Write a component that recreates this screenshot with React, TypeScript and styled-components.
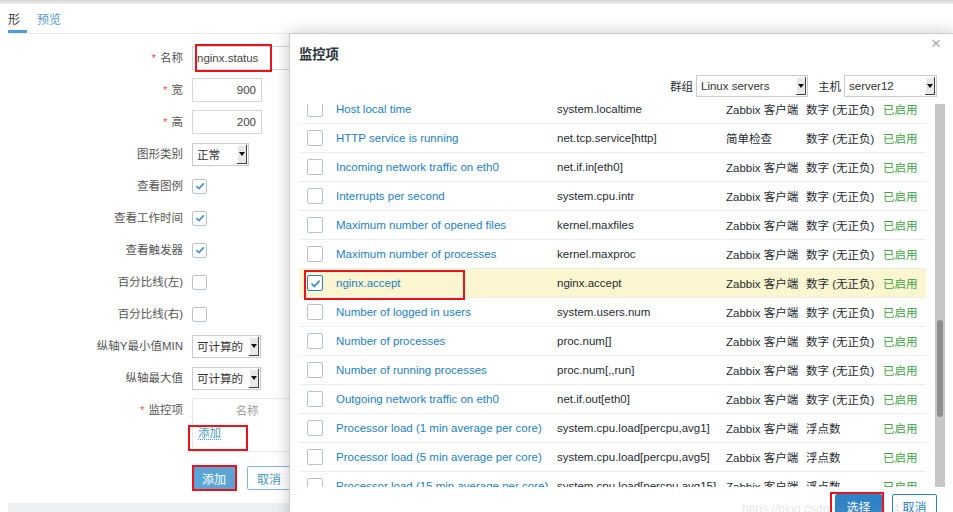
import React, { useEffect, useRef } from "react";
import styled, { createGlobalStyle } from "styled-components";

const GlobalStyle = createGlobalStyle`
  html, body {
    margin: 0;
    padding: 0;
    height: 100%;
    overflow: hidden;
    background: #fff;
  }
  body {
    font-family: "Liberation Sans", Arial, "Noto Sans CJK SC", sans-serif;
    font-size: 11.5px;
    color: #1f2c33;
  }
`;

const Page = styled.div`
  position: relative;
  width: 953px;
  height: 512px;
  overflow: hidden;
  display: flex;
  flex-direction: column;
`;

const TopStrip = styled.div`
  height: 4px;
  background: linear-gradient(#d6d6d6, #ececec);
`;

const Main = styled.div`
  flex: 1;
  margin-left: 8px;
  display: flex;
  flex-direction: column;
`;

const BottomBand = styled.div`
  height: 9px;
  margin-left: 8px;
  background: #eef0f1;
`;

const TabBar = styled.div`
  display: flex;
  height: 29px;
  border-bottom: 1px solid #e6e9eb;
`;

const Tab = styled.div<{ $active?: boolean; $clipped?: boolean }>`
  display: flex;
  align-items: center;
  padding: 3px 7px 0 ${(p) => (p.$clipped ? 0 : 7)}px;
  margin-right: 3px;
  font-size: 12px;
  border-bottom: 3px solid ${(p) => (p.$active ? "#4f9dd6" : "transparent")};
  color: ${(p) => (p.$active ? "#3a3a3a" : "#5b9bd0")};
`;

const Form = styled.div`
  display: grid;
  grid-template-columns: 175px 1fr;
  column-gap: 9px;
  row-gap: 8px;
  padding-top: 12px;
  align-items: center;
`;

const Label = styled.div<{ $top?: boolean }>`
  text-align: right;
  line-height: 24px;
  color: #555;
  align-self: ${(p) => (p.$top ? "start" : "center")};
`;

const Star = styled.span`
  color: #e45959;
  margin-right: 4px;
`;

const TextInput = styled.div<{ $w: number; $right?: boolean }>`
  box-sizing: border-box;
  width: ${(p) => p.$w}px;
  height: 24px;
  border: 1px solid #d3d7da;
  display: flex;
  align-items: center;
  justify-content: ${(p) => (p.$right ? "flex-end" : "flex-start")};
  padding: 0 5px 0 4px;
  color: #444;
  background: #fff;
`;

const Select = styled.div<{ $w: number; $h?: number }>`
  box-sizing: border-box;
  width: ${(p) => p.$w}px;
  height: ${(p) => p.$h ?? 23}px;
  border: 1px solid #c8cccf;
  display: flex;
  align-items: center;
  padding: 1px 1px 1px 4px;
  color: #333;
  background: #fff;
  font-size: 11.5px;
`;

const SelectText = styled.span`
  flex: 1;
  white-space: nowrap;
  overflow: hidden;
`;

const Arrow = styled.span`
  width: 10px;
  align-self: stretch;
  background: #e8e8e8;
  box-shadow: inset -1px -1px 0 #444, inset 1px 1px 0 #fff;
  display: flex;
  align-items: center;
  justify-content: center;
  &::after {
    content: "";
    border-left: 3px solid transparent;
    border-right: 3px solid transparent;
    border-top: 4px solid #111;
  }
`;

const Check = styled.div<{ $size: number; $checked?: boolean; $strong?: boolean }>`
  box-sizing: border-box;
  width: ${(p) => p.$size}px;
  height: ${(p) => p.$size}px;
  border: 1px solid ${(p) => (p.$checked && p.$strong ? "#2d80c2" : "#b7c3c9")};
  border-radius: 2px;
  background: #fff;
  display: flex;
  align-items: center;
  justify-content: center;
`;

const ItemsBox = styled.div`
  box-sizing: border-box;
  width: 110px;
  height: 54px;
  border: 1px solid #e4e8ea;
  padding: 0 5px;
`;

const ItemsHead = styled.div`
  height: 27px;
  line-height: 24px;
  text-align: center;
  color: #9a9a9a;
`;

const AddLink = styled.span`
  color: #4796c4;
  border-bottom: 1px dotted #4796c4;
  line-height: 14px;
`;

const FormButtons = styled.div`
  grid-column: 2;
  display: flex;
  gap: 11px;
  margin-top: 6px;
`;

const Button = styled.div<{ $primary?: boolean; $w: number; $tone?: string }>`
  box-sizing: border-box;
  width: ${(p) => p.$w}px;
  height: 24px;
  display: flex;
  align-items: center;
  justify-content: center;
  border-radius: 2px;
  font-size: 12px;
  border: 1px solid ${(p) => p.$tone ?? "#7fb6de"};
  background: ${(p) => (p.$primary ? p.$tone ?? "#5aa5d6" : "#fff")};
  color: ${(p) => (p.$primary ? "#fff" : p.$tone ?? "#4796c4")};
`;

const Modal = styled.div`
  position: absolute;
  left: 289px;
  top: 33px;
  width: 666px;
  height: 500px;
  box-sizing: border-box;
  background: #fff;
  border: 1px solid #c9cdd0;
  box-shadow: 0 0 16px rgba(0, 0, 0, 0.22);
  padding: 0 9px;
  display: flex;
  flex-direction: column;
`;

const ModalHead = styled.div`
  height: 38px;
  display: flex;
  justify-content: space-between;
`;

const ModalTitle = styled.div`
  align-self: center;
  font-size: 13.3px;
  font-weight: 700;
  color: #2a353b;
`;

const Close = styled.div`
  margin-top: 2px;
  margin-right: 4px;
  font-size: 17px;
  line-height: 16px;
  color: #a8a8a8;
`;

const FilterBar = styled.div`
  display: flex;
  justify-content: flex-end;
  align-items: center;
  margin-top: 3px;
  padding-right: 8px;
  gap: 3px;
`;

const FilterLabel = styled.span<{ $gap?: boolean }>`
  margin-left: ${(p) => (p.$gap ? 7 : 0)}px;
  color: #1f2c33;
`;

const ListWrap = styled.div`
  display: flex;
  margin-top: 7px;
  height: 383px;
`;

const ScrollArea = styled.div`
  width: 627px;
  height: 100%;
  overflow: hidden;
`;

const Track = styled.div`
  width: 10px;
  margin-left: 9px;
  background: #c6c6c6;
  display: flex;
  flex-direction: column;
`;

const Thumb = styled.div`
  width: 6px;
  margin-left: 2px;
  border-radius: 3px;
  background: #8e8e8e;
`;

const Row = styled.div<{ $selected?: boolean }>`
  display: grid;
  grid-template-columns: 37px 221px 169px 80px 77px 1fr;
  align-items: center;
  height: 29px;
  box-sizing: border-box;
  border-bottom: 1px solid #ebeef0;
  background: ${(p) => (p.$selected ? "#fbf6cf" : "#fff")};
  white-space: nowrap;
`;

const CheckCell = styled.div`
  padding-left: 8px;
`;

const NameLink = styled.span`
  color: #1b7fc4;
`;

const Status = styled.span`
  color: #3fa448;
`;

const ModalFooter = styled.div`
  display: flex;
  justify-content: flex-end;
  gap: 10px;
  padding-top: 7px;
  padding-right: 8px;
`;

const Mark = styled.div<{ $x: number; $y: number; $w: number; $h: number }>`
  position: absolute;
  left: ${(p) => p.$x}px;
  top: ${(p) => p.$y}px;
  width: ${(p) => p.$w}px;
  height: ${(p) => p.$h}px;
  box-sizing: border-box;
  border: 2px solid #e8141c;
  pointer-events: none;
`;

const Watermark = styled.div`
  position: absolute;
  left: 742px;
  top: 502px;
  font-size: 12px;
  color: rgba(150, 150, 150, 0.25);
  white-space: nowrap;
  pointer-events: none;
`;

const Tick = ({ size }: { size: number }) => (
  <svg width={size} height={size} viewBox="0 0 12 12">
    <path d="M2.3 6.2 L4.9 8.7 L9.8 3.4" fill="none" stroke="#3c8fd0" strokeWidth="1.6" />
  </svg>
);

type Item = [string, string, string, string];

const AGENT = "Zabbix 客户端";
const NUM = "数字 (无正负)";
const FLOAT = "浮点数";
const CHAR = "字符";

const before: Item[] = [
  ["Agent ping", "agent.ping", AGENT, NUM],
  ["Available memory", "vm.memory.size[available]", AGENT, NUM],
  ["Available memory in %", "vm.memory.size[pavailable]", AGENT, FLOAT],
  ["Checksum of /etc/passwd", "vfs.file.cksum[/etc/passwd]", AGENT, NUM],
  ["Context switches per second", "system.cpu.switches", AGENT, NUM],
  ["CPU guest nice time", "system.cpu.util[,guest_nice]", AGENT, FLOAT],
  ["CPU guest time", "system.cpu.util[,guest]", AGENT, FLOAT],
  ["CPU idle time", "system.cpu.util[,idle]", AGENT, FLOAT],
  ["CPU interrupt time", "system.cpu.util[,interrupt]", AGENT, FLOAT],
  ["CPU iowait time", "system.cpu.util[,iowait]", AGENT, FLOAT],
  ["CPU nice time", "system.cpu.util[,nice]", AGENT, FLOAT],
  ["CPU softirq time", "system.cpu.util[,softirq]", AGENT, FLOAT],
  ["CPU steal time", "system.cpu.util[,steal]", AGENT, FLOAT],
  ["CPU system time", "system.cpu.util[,system]", AGENT, FLOAT],
  ["CPU user time", "system.cpu.util[,user]", AGENT, FLOAT],
  ["Disk read rate", "vfs.dev.read[sda]", AGENT, FLOAT],
  ["Disk write rate", "vfs.dev.write[sda]", AGENT, FLOAT],
  ["Free disk space on /", "vfs.fs.size[/,free]", AGENT, NUM],
  ["Free disk space on / (percentage)", "vfs.fs.size[/,pfree]", AGENT, FLOAT],
  ["Free disk space on /boot", "vfs.fs.size[/boot,free]", AGENT, NUM],
  ["Free disk space on /boot (percentage)", "vfs.fs.size[/boot,pfree]", AGENT, FLOAT],
  ["Free inodes on / (percentage)", "vfs.fs.inode[/,pfree]", AGENT, FLOAT],
  ["Free inodes on /boot (percentage)", "vfs.fs.inode[/boot,pfree]", AGENT, FLOAT],
  ["Free memory", "vm.memory.size[free]", AGENT, NUM],
  ["Free swap space", "system.swap.size[,free]", AGENT, NUM],
  ["Free swap space in %", "system.swap.size[,pfree]", AGENT, FLOAT],
  ["Host boot time", "system.boottime", AGENT, NUM],
  ["Host name", "system.hostname", AGENT, CHAR],
  ["Host name of zabbix_agentd running", "agent.hostname", AGENT, CHAR],
];

const visible: Item[] = [
  ["Host local time", "system.localtime", AGENT, NUM],
  ["HTTP service is running", "net.tcp.service[http]", "简单检查", NUM],
  ["Incoming network traffic on eth0", "net.if.in[eth0]", AGENT, NUM],
  ["Interrupts per second", "system.cpu.intr", AGENT, NUM],
  ["Maximum number of opened files", "kernel.maxfiles", AGENT, NUM],
  ["Maximum number of processes", "kernel.maxproc", AGENT, NUM],
  ["nginx.accept", "nginx.accept", AGENT, NUM],
  ["Number of logged in users", "system.users.num", AGENT, NUM],
  ["Number of processes", "proc.num[]", AGENT, NUM],
  ["Number of running processes", "proc.num[,,run]", AGENT, NUM],
  ["Outgoing network traffic on eth0", "net.if.out[eth0]", AGENT, NUM],
  ["Processor load (1 min average per core)", "system.cpu.load[percpu,avg1]", AGENT, FLOAT],
  ["Processor load (5 min average per core)", "system.cpu.load[percpu,avg5]", AGENT, FLOAT],
  ["Processor load (15 min average per core)", "system.cpu.load[percpu,avg15]", AGENT, FLOAT],
];

const after: Item[] = [
  ["System information", "system.uname", AGENT, CHAR],
  ["System uptime", "system.uptime", AGENT, NUM],
  ["Total disk space on /", "vfs.fs.size[/,total]", AGENT, NUM],
  ["Total disk space on /boot", "vfs.fs.size[/boot,total]", AGENT, NUM],
  ["Total memory", "vm.memory.size[total]", AGENT, NUM],
  ["Total swap space", "system.swap.size[,total]", AGENT, NUM],
  ["Used disk space on /", "vfs.fs.size[/,used]", AGENT, NUM],
  ["Used disk space on /boot", "vfs.fs.size[/boot,used]", AGENT, NUM],
  ["Version of zabbix_agent(d) running", "agent.version", AGENT, CHAR],
];

const items = [...before, ...visible, ...after];

const ROW_H = 29;
const VIEW_H = 383;
const SCROLL_TOP = before.length * ROW_H + 9;
const CONTENT_H = items.length * ROW_H;
const THUMB_H = Math.round((VIEW_H * VIEW_H) / CONTENT_H);
const THUMB_TOP = Math.round((SCROLL_TOP / (CONTENT_H - VIEW_H)) * (VIEW_H - THUMB_H));

const App = () => {
  const listRef = useRef<HTMLDivElement>(null);

  useEffect(() => {
    if (listRef.current) {
      listRef.current.scrollTop = SCROLL_TOP;
    }
  }, []);

  return (
    <Page>
      <GlobalStyle />
      <TopStrip />
      <Main>
        <TabBar>
          <Tab $active $clipped>形</Tab>
          <Tab>预览</Tab>
        </TabBar>
        <Form>
          <Label><Star>*</Star>名称</Label>
          <TextInput $w={110}>nginx.status</TextInput>
          <Label><Star>*</Star>宽</Label>
          <TextInput $w={70} $right>900</TextInput>
          <Label><Star>*</Star>高</Label>
          <TextInput $w={70} $right>200</TextInput>
          <Label>图形类别</Label>
          <Select $w={57}><SelectText>正常</SelectText><Arrow /></Select>
          <Label>查看图例</Label>
          <Check $size={15} $checked><Tick size={12} /></Check>
          <Label>查看工作时间</Label>
          <Check $size={15} $checked><Tick size={12} /></Check>
          <Label>查看触发器</Label>
          <Check $size={15} $checked><Tick size={12} /></Check>
          <Label>百分比线(左)</Label>
          <Check $size={15} />
          <Label>百分比线(右)</Label>
          <Check $size={15} />
          <Label>纵轴Y最小值MIN</Label>
          <Select $w={69}><SelectText>可计算的</SelectText><Arrow /></Select>
          <Label>纵轴最大值</Label>
          <Select $w={69}><SelectText>可计算的</SelectText><Arrow /></Select>
          <Label $top><Star>*</Star>监控项</Label>
          <ItemsBox>
            <ItemsHead>名称</ItemsHead>
            <AddLink>添加</AddLink>
          </ItemsBox>
          <FormButtons>
            <Button $primary $w={44}>添加</Button>
            <Button $w={44}>取消</Button>
          </FormButtons>
        </Form>
      </Main>
      <BottomBand />

      <Modal>
        <ModalHead>
          <ModalTitle>监控项</ModalTitle>
          <Close>×</Close>
        </ModalHead>
        <FilterBar>
          <FilterLabel>群组</FilterLabel>
          <Select $w={112} $h={22}><SelectText>Linux servers</SelectText><Arrow /></Select>
          <FilterLabel $gap>主机</FilterLabel>
          <Select $w={93} $h={22}><SelectText>server12</SelectText><Arrow /></Select>
        </FilterBar>
        <ListWrap>
          <ScrollArea ref={listRef}>
            {items.map(([name, key, type, info]) => {
              const selected = name === "nginx.accept";
              return (
                <Row key={key} $selected={selected}>
                  <CheckCell>
                    <Check $size={16} $checked={selected} $strong>
                      {selected && <Tick size={13} />}
                    </Check>
                  </CheckCell>
                  <NameLink>{name}</NameLink>
                  <span>{key}</span>
                  <span>{type}</span>
                  <span>{info}</span>
                  <Status>已启用</Status>
                </Row>
              );
            })}
          </ScrollArea>
          <Track>
            <Thumb style={{ marginTop: THUMB_TOP, height: THUMB_H }} />
          </Track>
        </ListWrap>
        <ModalFooter>
          <Button $primary $w={47} $tone="#2e83c6">选择</Button>
          <Button $w={45} $tone="#2e83c6">取消</Button>
        </ModalFooter>
      </Modal>

      <Watermark>https://blog.csdn.net/weixin_43</Watermark>
      <Mark $x={195} $y={44} $w={77} $h={28} />
      <Mark $x={188} $y={425} $w={60} $h={26} />
      <Mark $x={192} $y={465} $w={45} $h={26} />
      <Mark $x={304} $y={270} $w={161} $h={30} />
      <Mark $x={830} $y={492} $w={54} $h={25} />
    </Page>
  );
};

export default App;
